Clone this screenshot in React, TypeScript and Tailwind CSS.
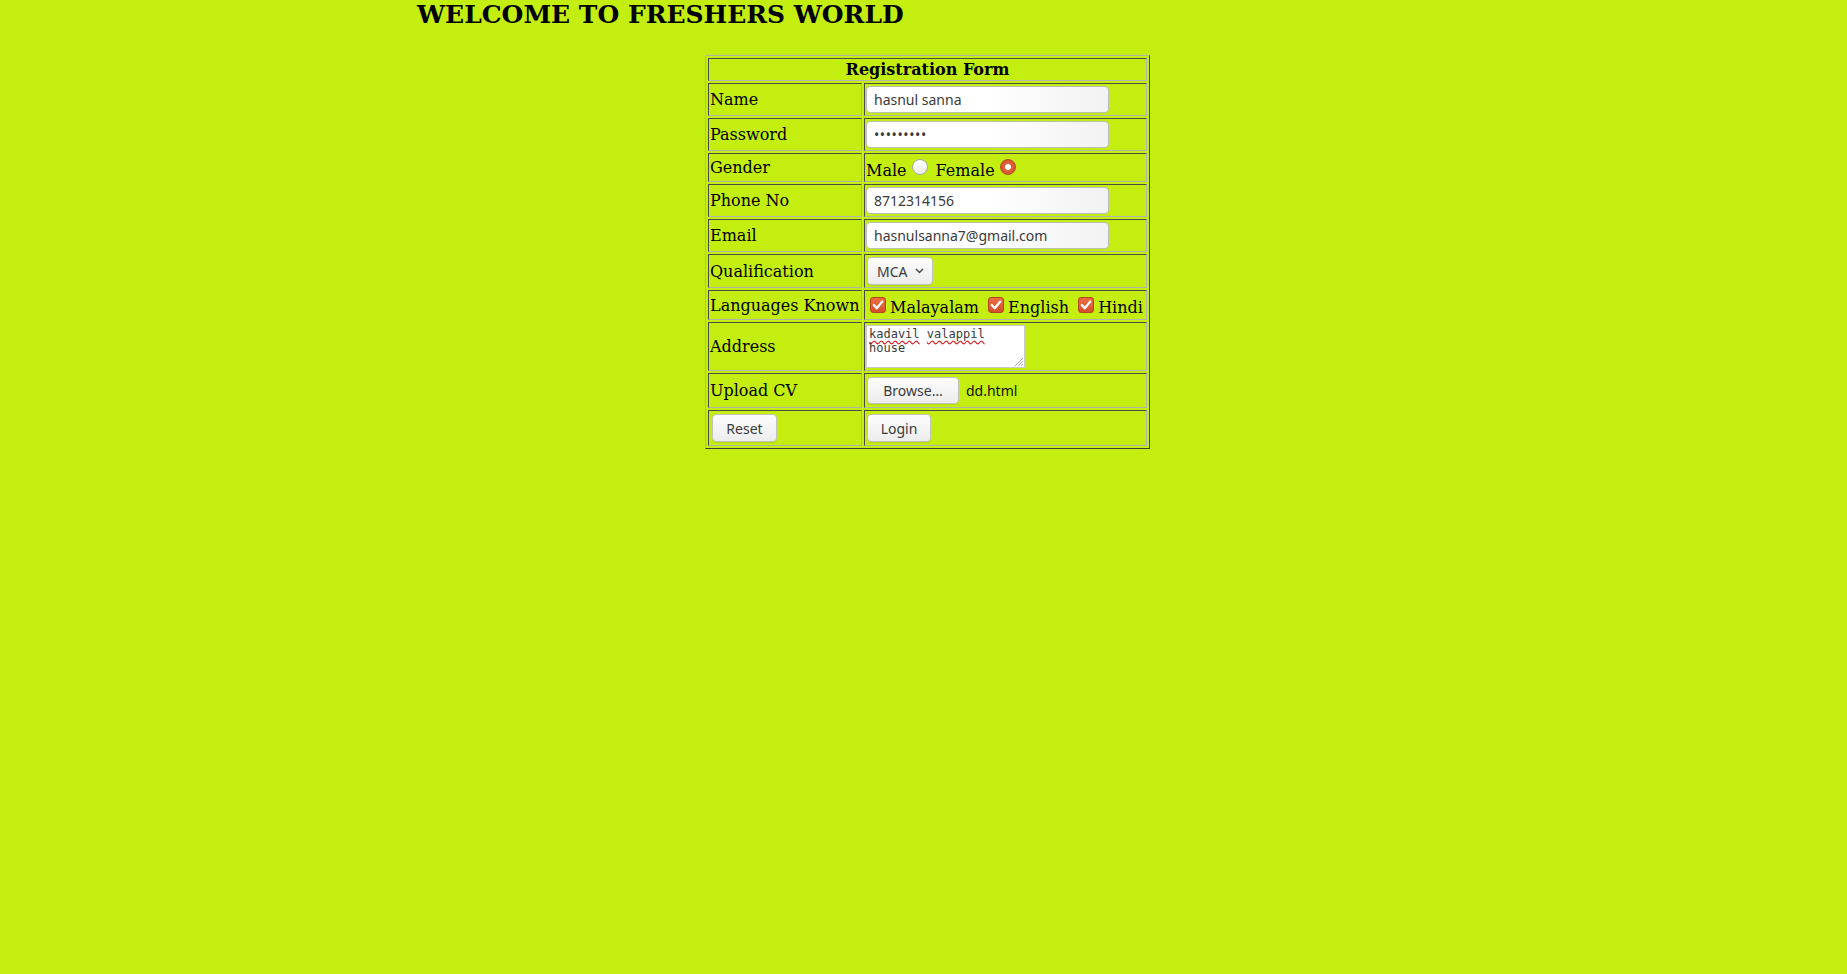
import React from 'react';

const td =
  "border border-t-[#4b4b4b] border-l-[#4b4b4b] border-r-[#b3b3b3] border-b-[#b3b3b3] p-[1px] align-middle whitespace-nowrap";
const sans = "font-['Noto_Sans',sans-serif]";

const Field = ({ value, pw }: { value: string; pw?: boolean }) => (
  <input
    readOnly
    type="text"
    value={value}
    className={`block w-[243px] h-[27px] rounded-[4px] border border-[#bcbcbc] bg-gradient-to-r from-white via-white to-[#f2f2f2] pl-[7px] text-[14px] text-[#3a3a3a] outline-none ${sans} ${pw ? 'tracking-[0.6px]' : ''}`}
  />
);

const Btn = ({ label, w }: { label: string; w: string }) => (
  <button
    type="button"
    className={`${w} h-[28px] rounded-[4px] border border-[#c2c2c2] bg-gradient-to-b from-[#fdfdfd] to-[#ececec] shadow-[0_1px_0_rgba(0,0,0,0.08)] text-[14px] text-[#3a3a3a] ${sans}`}
  >
    {label}
  </button>
);

const Radio = ({ checked }: { checked?: boolean }) =>
  checked ? (
    <span className="inline-block w-4 h-4 rounded-full ml-[5px] mr-[3px] mt-[3px] align-[1px] border border-[#b4441c] bg-[radial-gradient(circle,#ffffff_2.6px,#e0603a_3.4px,#d4522c_100%)]" />
  ) : (
    <span className="inline-block w-4 h-4 rounded-full ml-[5px] mr-[3px] mt-[3px] align-[1px] border border-[#a9a9a9] bg-gradient-to-b from-white to-[#ececec]" />
  );

const Check = () => (
  <span className="inline-block w-4 h-4 rounded-[3px] ml-[4px] mr-[4px] mt-[3px] align-baseline border border-[#b4441c] bg-gradient-to-b from-[#ec6e44] to-[#d2502a]">
    <svg className="block" width="14" height="14" viewBox="0 0 14 14">
      <path d="M2.8 7 L5.8 10.2 L11.3 3.6" fill="none" stroke="white" strokeWidth="2.3" strokeLinecap="round" strokeLinejoin="round" />
    </svg>
  </span>
);

const App = () => {
  return (
    <div className="min-h-screen bg-[#c4ee10] text-black font-['DejaVu_Serif',serif] text-[16px] leading-[19px]">
      <h2 className="ml-[417px] pt-[1px] text-[25px] leading-[28px] font-bold">WELCOME TO FRESHERS WORLD</h2>
      <table className="table-fixed w-[445px] ml-[705px] mt-[26px] border-separate border-spacing-[2px] border border-t-[#b3b3b3] border-l-[#b3b3b3] border-r-[#3f3f3f] border-b-[#3f3f3f]">
        <colgroup>
          <col className="w-[154px]" />
          <col />
        </colgroup>
        <tbody>
          <tr>
            <th colSpan={2} className={`${td} h-[23px] text-center font-bold`}>Registration Form</th>
          </tr>
          <tr>
            <td className={`${td} h-[33px]`}>Name</td>
            <td className={td}><Field value="hasnul sanna" /></td>
          </tr>
          <tr>
            <td className={`${td} h-[33px]`}>Password</td>
            <td className={td}><Field value="•••••••••" pw /></td>
          </tr>
          <tr>
            <td className={`${td} h-[29px]`}>Gender</td>
            <td className={td}>
              <div>
                Male<Radio /> Female<Radio checked />
              </div>
            </td>
          </tr>
          <tr>
            <td className={`${td} h-[33px]`}>Phone No</td>
            <td className={td}><Field value="8712314156" /></td>
          </tr>
          <tr>
            <td className={`${td} h-[33px]`}>Email</td>
            <td className={td}><Field value="hasnulsanna7@gmail.com" /></td>
          </tr>
          <tr>
            <td className={`${td} h-[34px]`}>Qualification</td>
            <td className={td}>
              <div className={`flex items-center justify-between w-[66px] h-[28px] ml-[1px] pl-[9px] pr-[8px] rounded-[4px] border border-[#c2c2c2] bg-gradient-to-b from-[#fdfdfd] to-[#ececec] shadow-[0_1px_0_rgba(0,0,0,0.08)] text-[14px] text-[#3a3a3a] ${sans}`}>
                <span>MCA</span>
                <svg width="9" height="6" viewBox="0 0 9 6">
                  <path d="M1 1 L4.5 4.5 L8 1" fill="none" stroke="#444" strokeWidth="1.4" />
                </svg>
              </div>
            </td>
          </tr>
          <tr>
            <td className={`${td} h-[30px]`}>Languages Known</td>
            <td className={td}>
              <div>
                <Check />Malayalam <Check />English <Check />Hindi
              </div>
            </td>
          </tr>
          <tr>
            <td className={`${td} h-[49px]`}>Address</td>
            <td className={td}>
              <div className="relative w-[159px] h-[43px] border border-[#c8c8c8] bg-white px-[2px] pt-[1px] font-['DejaVu_Sans_Mono',monospace] text-[12px] leading-[14px] text-[#3a3a3a]">
                <div>
                  <span className="underline decoration-wavy decoration-[#e01b24] underline-offset-[2px]">kadavil</span>{' '}
                  <span className="underline decoration-wavy decoration-[#e01b24] underline-offset-[2px]">valappil</span>
                </div>
                <div>house</div>
                <svg className="absolute right-0 bottom-0" width="11" height="11" viewBox="0 0 11 11">
                  <path d="M10 2 L2 10 M10 5 L5 10 M10 8 L8 10" stroke="#a8a8a8" strokeWidth="1" />
                </svg>
              </div>
            </td>
          </tr>
          <tr>
            <td className={`${td} h-[35px]`}>Upload CV</td>
            <td className={td}>
              <div className={`flex items-center gap-[7px] ${sans}`}>
                <Btn label="Browse…" w="w-[92px] !h-[27px] ml-[1px]" />
                <span className="text-[14px] text-[#111]">dd.html</span>
              </div>
            </td>
          </tr>
          <tr>
            <td className={`${td} h-[36px]`}>
              <div className="flex pl-[2px]"><Btn label="Reset" w="w-[65px]" /></div>
            </td>
            <td className={td}>
              <div className="flex pl-[1px]"><Btn label="Login" w="w-[64px]" /></div>
            </td>
          </tr>
        </tbody>
      </table>
    </div>
  );
};

export default App;
